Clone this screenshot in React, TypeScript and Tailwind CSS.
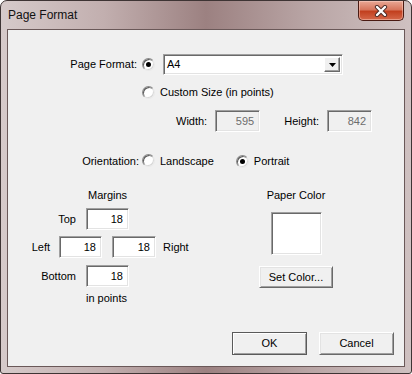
import React from 'react';
import clsx from 'clsx';

// Page Format dialog — Windows 7 basic theme look

function Radio({ checked }: { checked?: boolean }) {
  return (
    <span className="inline-flex h-[13px] w-[13px] shrink-0 items-center justify-center rounded-full border border-t-[#8a8a8a] border-l-[#8a8a8a] border-r-[#e8e8e8] border-b-[#e8e8e8] bg-white shadow-[inset_1px_1px_0_#5a5a5a,inset_-1px_-1px_0_#d8d8d8]">
      {checked && <span className="h-[5px] w-[5px] rounded-full bg-black" />}
    </span>
  );
}

function Field({ value, className, disabled }: { value: string; className?: string; disabled?: boolean }) {
  return (
    <div
      className={clsx(
        'flex h-[22px] shrink-0 items-center justify-end border border-t-[#a0a0a0] border-l-[#a0a0a0] border-r-white border-b-white pr-[5px] shadow-[inset_1px_1px_0_#696969,inset_-1px_-1px_0_#e3e3e3]',
        disabled ? 'bg-[#f0f0f0] text-[#6d6d6d]' : 'bg-white text-black',
        className,
      )}
    >
      {value}
    </div>
  );
}

function Button({ label, className, isDefault }: { label: string; className?: string; isDefault?: boolean }) {
  return (
    <div
      className={clsx(
        'flex items-center justify-center bg-[#f0f0f0] text-black',
        isDefault
          ? 'border border-[#5a5a5a] shadow-[inset_1px_1px_0_#ffffff,inset_-1px_-1px_0_#a0a0a0]'
          : 'border border-t-white border-l-white border-r-[#696969] border-b-[#696969] shadow-[inset_1px_1px_0_#e3e3e3,inset_-1px_-1px_0_#a0a0a0]',
        className,
      )}
    >
      {label}
    </div>
  );
}

export default function App() {
  return (
    <div className="h-[374px] w-[412px] bg-white font-['Liberation_Sans',Arial,sans-serif] text-[11px] leading-none text-black">
      <div className="relative flex h-full w-full flex-col rounded-t-[7px] rounded-b-[3px] border border-[#3e3434] bg-[linear-gradient(90deg,#d6caca_0%,#c2afaf_25%,#9c8181_50%,#b9a5a5_75%,#cfc1c1_100%)]">
        {/* Title bar */}
        <div className="flex h-[28px] shrink-0 items-center pl-[7px] pb-[1px] text-[12px] text-[#111]">
          Page Format
        </div>

        {/* Close button */}
        <div className="absolute right-[7px] top-0 flex h-[20px] w-[46px] items-center justify-center rounded-b-[5px] border border-t-0 border-[#4a1a12] bg-[linear-gradient(180deg,#e9a895_0%,#d7765d_45%,#c2401f_55%,#d5684a_100%)] shadow-[inset_0_0_0_1px_rgba(255,220,210,0.45)]">
          <svg width="14" height="12" viewBox="0 0 14 12">
            <path d="M3 2 L11 10 M11 2 L3 10" stroke="#4b2a26" strokeWidth="4.2" strokeLinecap="round" />
            <path d="M3 2 L11 10 M11 2 L3 10" stroke="#ffffff" strokeWidth="2.4" strokeLinecap="round" />
          </svg>
        </div>

        {/* Client area */}
        <div className="mx-[6px] mb-[6px] flex flex-1 flex-col border border-[#6a5858] bg-[#f0f0f0] pt-[24px]">
          {/* Page format row */}
          <div className="flex h-[21px] items-center">
            <span className="w-[129px] text-right">Page Format:</span>
            <span className="ml-[5px]"><Radio checked /></span>
            <div className="ml-[8px] flex h-[21px] w-[180px] items-center justify-between border border-t-[#a0a0a0] border-l-[#a0a0a0] border-r-white border-b-white bg-white pl-[3px] pr-[2px] shadow-[inset_1px_1px_0_#696969,inset_-1px_-1px_0_#e3e3e3]">
              <span>A4</span>
              <span className="flex h-[15px] w-[16px] items-center justify-center border border-t-white border-l-white border-r-[#696969] border-b-[#696969] bg-[#f0f0f0] shadow-[inset_-1px_-1px_0_#a0a0a0]">
                <svg width="7" height="4" viewBox="0 0 7 4">
                  <path d="M0 0 H7 L3.5 4 Z" fill="#000" />
                </svg>
              </span>
            </div>
          </div>

          {/* Custom size row */}
          <div className="mt-[10px] flex h-[14px] items-center pl-[134px]">
            <Radio />
            <span className="ml-[5px]">Custom Size (in points)</span>
          </div>

          {/* Width / height */}
          <div className="mt-[11px] flex h-[22px] items-center">
            <span className="ml-[168px]">Width:</span>
            <Field value="595" disabled className="ml-[8px] w-[45px]" />
            <span className="ml-[24px]">Height:</span>
            <Field value="842" disabled className="ml-[8px] w-[45px]" />
          </div>

          {/* Orientation */}
          <div className="mt-[22px] flex h-[14px] items-center">
            <span className="w-[131px] text-right">Orientation:</span>
            <span className="ml-[3px]"><Radio /></span>
            <span className="ml-[5px]">Landscape</span>
            <span className="ml-[22px]"><Radio checked /></span>
            <span className="ml-[5px]">Portrait</span>
          </div>

          {/* Margins + paper color */}
          <div className="mt-[20px] flex">
            <div className="flex w-[251px] flex-col">
              <div className="flex h-[14px] items-center pl-[80px]">Margins</div>
              <div className="mt-[6px] flex h-[22px] items-center">
                <span className="w-[68px] text-right">Top</span>
                <Field value="18" className="ml-[10px] w-[43px]" />
              </div>
              <div className="mt-[6px] flex h-[22px] items-center">
                <span className="w-[42px] text-right">Left</span>
                <Field value="18" className="ml-[9px] w-[43px]" />
                <Field value="18" className="ml-[10px] w-[44px]" />
                <span className="ml-[7px]">Right</span>
              </div>
              <div className="mt-[7px] flex h-[22px] items-center">
                <span className="w-[68px] text-right">Bottom</span>
                <Field value="18" className="ml-[10px] w-[43px]" />
              </div>
              <div className="mt-[4px] flex h-[14px] items-center pl-[78px]">in points</div>
            </div>

            <div className="flex w-[74px] flex-col items-center">
              <div className="flex h-[14px] items-center">Paper Color</div>
              <div className="mt-[10px] h-[43px] w-[51px] border border-t-[#a0a0a0] border-l-[#a0a0a0] border-r-white border-b-white bg-white shadow-[inset_1px_1px_0_#696969,inset_-1px_-1px_0_#e3e3e3]" />
              <Button label="Set Color..." className="mt-[11px] h-[22px] w-[74px]" />
            </div>
          </div>

          {/* Dialog buttons */}
          <div className="mt-auto flex justify-end gap-[12px] pb-[11px] pr-[10px]">
            <Button label="OK" isDefault className="h-[23px] w-[75px]" />
            <Button label="Cancel" className="h-[23px] w-[75px]" />
          </div>
        </div>
      </div>
    </div>
  );
}
